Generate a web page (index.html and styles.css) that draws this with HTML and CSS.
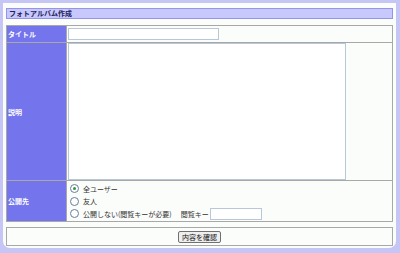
FILE: index.html
```html
<!DOCTYPE html>
<html lang="ja">
<head>
  <meta charset="UTF-8">
  <title>フォトアルバム作成</title>
  <link rel="stylesheet" href="styles.css">
</head>
<body>

<div class="page">
  <div class="title">フォトアルバム作成</div>

  <table class="form">
    <tr class="row-title">
      <th>タイトル</th>
      <td><input type="text" class="title-input"></td>
    </tr>
    <tr class="row-desc">
      <th>説明</th>
      <td><textarea class="desc"></textarea></td>
    </tr>
    <tr class="row-open">
      <th>公開先</th>
      <td>
        <label class="opt"><span class="radio on"></span>全ユーザー</label>
        <label class="opt"><span class="radio"></span>友人</label>
        <label class="opt"><span class="radio"></span>公開しない(閲覧キーが必要)<span class="key">閲覧キー</span><input type="text" class="key-input"></label>
      </td>
    </tr>
  </table>

  <div class="submit">
    <button type="button">内容を確認</button>
  </div>
</div>

</body>
</html>
```

FILE: styles.css
```css
html, body { margin: 0; height: 100%; }
body { background: #c6c6f6; font-family: "Noto Sans CJK JP", "Liberation Sans", sans-serif; font-size: 7px; }
.page { box-sizing: border-box; height: 248px; margin: 0 4px 0 3px; padding: 5px 3px 0 3px; background: #fbfdfb; border-radius: 0 0 7px 7px; border-top: 3px solid #c6c6f6; }
.title { height: 9px; line-height: 9px; border: 1px solid #9494ec; background: #c8c8fc; color: #22225a; padding-left: 2px; font-weight: bold; }
.form { width: 100%; margin-top: 6px; border-collapse: collapse; border: 1px solid #a8a8a8; }
.form th { width: 58px; background: #7474ec; color: #fff; font-weight: bold; text-align: left; padding: 0 0 0 1px; border: 1px solid #a8a8a8; border-left-width: 0; }
.form td { padding: 0 0 0 1px; border: 1px solid #a8a8a8; }
.row-title th, .row-title td { height: 16px; }
.title-input { box-sizing: border-box; width: 151px; height: 12px; margin: 0; border: 1px solid #b8c8d8; background: #fff; display: block; }
.row-desc td { height: 137px; }
.desc { box-sizing: border-box; display: block; width: 278px; height: 137px; margin: 0; border: 1px solid #b8c8d8; background: #fff; resize: none; overflow-y: scroll; }
.desc::-webkit-scrollbar { width: 10px; background: #fafcfa; }
.desc::-webkit-scrollbar-track { background: #fafcfa; }
.desc::-webkit-scrollbar-button { display: block; height: 10px; background: #eceeec; }
.row-open td { height: 38px; padding: 1px 0 1px 3px; }
.opt { display: flex; align-items: center; height: 12.5px; color: #333; }
.radio { box-sizing: border-box; width: 9px; height: 9px; border: 1px solid #6a7c98; border-radius: 50%; background: #fff; margin-right: 4px; position: relative; }
.radio.on::after { content: ""; position: absolute; left: 2px; top: 2px; width: 3px; height: 3px; border-radius: 50%; background: #2a9a3a; }
.key { margin-left: 9px; }
.key-input { box-sizing: border-box; width: 52px; height: 12px; margin-left: 1px; border: 1px solid #b8c8d8; background: #fff; }
.submit { margin-top: 5px; height: 17px; border: 1px solid #a8a8a8; display: flex; justify-content: center; align-items: center; }
.submit button { font-family: inherit; font-size: 7px; height: 12px; padding: 0 3px; border: 1px solid #707070; border-radius: 2px; background: #efefef; color: #111; line-height: 10px; }
```
